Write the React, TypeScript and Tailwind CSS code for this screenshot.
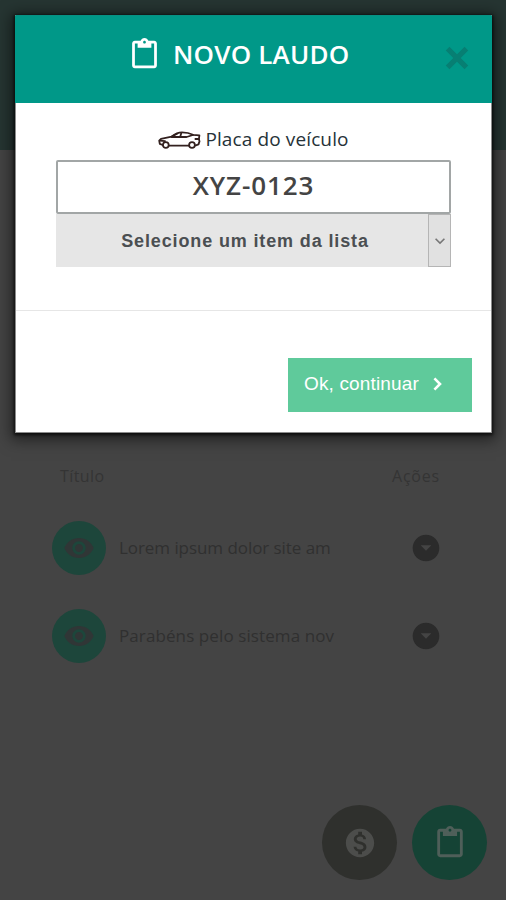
import {
  MdArrowDropDownCircle,
  MdContentPaste,
  MdExpandMore,
  MdMonetizationOn,
  MdRemoveRedEye,
} from 'react-icons/md'

const laudos = [
  { id: 1, titulo: 'Lorem ipsum dolor site am', spacing: 'tracking-[-0.06px]' },
  { id: 2, titulo: 'Parabéns pelo sistema nov', spacing: 'tracking-[0.1px]' },
]

function CarIcon() {
  return (
    <svg
      width="43"
      height="18"
      viewBox="0 0 43 18"
      fill="none"
      stroke="#33211f"
      strokeWidth="1.8"
      strokeLinecap="round"
      strokeLinejoin="round"
    >
      <path d="M4.6 14 1.8 12.8 1.2 9.6 3 7.8 13.6 5.6C17 3 20 1.4 24 1.4c5 0 8 .8 11 2.4l6.4.6-.5 3.6.6 2.4-1 3-2.7 1M11 14.6h19.6" />
      <path d="M13.6 6h15L35 4M23.4 1.8l-1.2 4M14 5.4l5-2.6M2 9.6l5 .6M40.8 8h-3.4" />
      <circle cx="7.8" cy="14" r="2.9" />
      <circle cx="34" cy="14" r="2.9" />
    </svg>
  )
}

function CloseIcon() {
  return (
    <svg width="24" height="24" viewBox="0 0 24 24" stroke="#077f73" strokeWidth="5.2">
      <path d="M2.6 2.6 21.4 21.4M21.4 2.6 2.6 21.4" />
    </svg>
  )
}

function NextIcon() {
  return (
    <svg width="9" height="14" viewBox="0 0 9 14" fill="none" stroke="currentColor" strokeWidth="2.6">
      <path d="m1.4 1.4 5.6 5.6-5.6 5.6" />
    </svg>
  )
}

function LaudoList() {
  return (
    <div className="flex flex-col pl-[52px] pr-[66px]">
      <div className="flex justify-between pl-2 text-base leading-6 text-[#343434]">
        <span className="tracking-[0.4px]">Título</span>
        <span className="tracking-[0.8px]">Ações</span>
      </div>
      <div className="mt-8 flex flex-col gap-[33px]">
        {laudos.map((laudo) => (
          <div key={laudo.id} className="flex h-[55px] items-center">
            <div className="flex size-[54px] items-center justify-center rounded-full bg-[#1d463b]">
              <MdRemoveRedEye className="size-8 text-[#303636]" />
            </div>
            <span
              className={`ml-[13px] flex-1 whitespace-nowrap text-[17px] leading-6 text-[#303030] ${laudo.spacing}`}
            >
              {laudo.titulo}
            </span>
            <MdArrowDropDownCircle className="-mr-[2px] size-8 text-[#2b2b2b]" />
          </div>
        ))}
      </div>
    </div>
  )
}

function Modal() {
  return (
    <div className="absolute left-[15px] top-[15px] flex h-[418px] w-[477px] flex-col border border-[#8c8c8c] border-t-[#079183] bg-white shadow-[0_3px_14px_4px_rgba(0,0,0,0.5),0_1px_3px_1px_rgba(0,0,0,0.7)]">
      <div className="-mx-px flex h-[87px] items-start bg-[#009888] pl-[113px] pr-[23px] pt-[22px] text-white">
        <MdContentPaste className="size-[33px]" />
        <h1 className="ml-[12px] flex-1 whitespace-nowrap text-[26px] font-semibold leading-8 tracking-[0.2px]">
          NOVO LAUDO
        </h1>
        <button className="mt-[8px]">
          <CloseIcon />
        </button>
      </div>

      <div className="flex h-[208px] flex-col border-b border-[#e6e6e6] px-10 pt-[24px]">
        <label className="flex h-[33px] items-start justify-center gap-1 whitespace-nowrap text-[19px] font-medium leading-6 tracking-[0.12px] text-[#263238]">
          <span className="mt-1">
            <CarIcon />
          </span>
          Placa do veículo
        </label>
        <div className="flex h-[54px] shrink-0 items-center justify-center rounded-[2px] border-2 border-[#a2a6a6] pb-1 text-[26px] font-semibold tracking-[0.9px] text-[#444]">
          XYZ-0123
        </div>
        <div className="flex h-[53px] shrink-0 bg-[#e6e6e6] font-['Liberation_Sans',sans-serif]">
          <span className="flex flex-1 items-center justify-center whitespace-nowrap pl-[6px] pt-[2px] text-[18px] font-bold tracking-[0.87px] text-[#4b4f52]">
            Selecione um item da lista
          </span>
          <span className="flex w-[23px] items-center justify-center border border-[#b5b5b5] bg-[#e1e1e1]">
            <MdExpandMore className="size-5 shrink-0 text-[#777]" />
          </span>
        </div>
      </div>

      <div className="flex justify-end pr-[19px] pt-[47px]">
        <button className="flex h-[54px] w-[184px] items-center bg-[#5fca9b] pb-[2px] pl-[16px] font-['Liberation_Sans',sans-serif] text-[19px] tracking-[0.15px] text-white">
          <span className="whitespace-nowrap">Ok, continuar</span>
          <span className="ml-[14px]">
            <NextIcon />
          </span>
        </button>
      </div>
    </div>
  )
}

export default function App() {
  return (
    <div className="relative flex h-[900px] w-[506px] flex-col overflow-hidden bg-[#444] font-['Open_Sans','Noto_Sans',sans-serif]">
      <div className="h-[150px] shrink-0 bg-[#263532]" />
      <div className="mt-[314px]">
        <LaudoList />
      </div>
      <div className="mt-auto flex justify-end gap-[15px] pb-5 pr-[19px]">
        <button className="flex size-[75px] items-center justify-center rounded-full bg-[#2f302d] text-[#4c4d4b]">
          <MdMonetizationOn className="size-[34px]" />
        </button>
        <button className="flex size-[75px] items-center justify-center rounded-full bg-[#154335] text-[#4f5f59]">
          <MdContentPaste className="size-[34px]" />
        </button>
      </div>
      <Modal />
    </div>
  )
}
